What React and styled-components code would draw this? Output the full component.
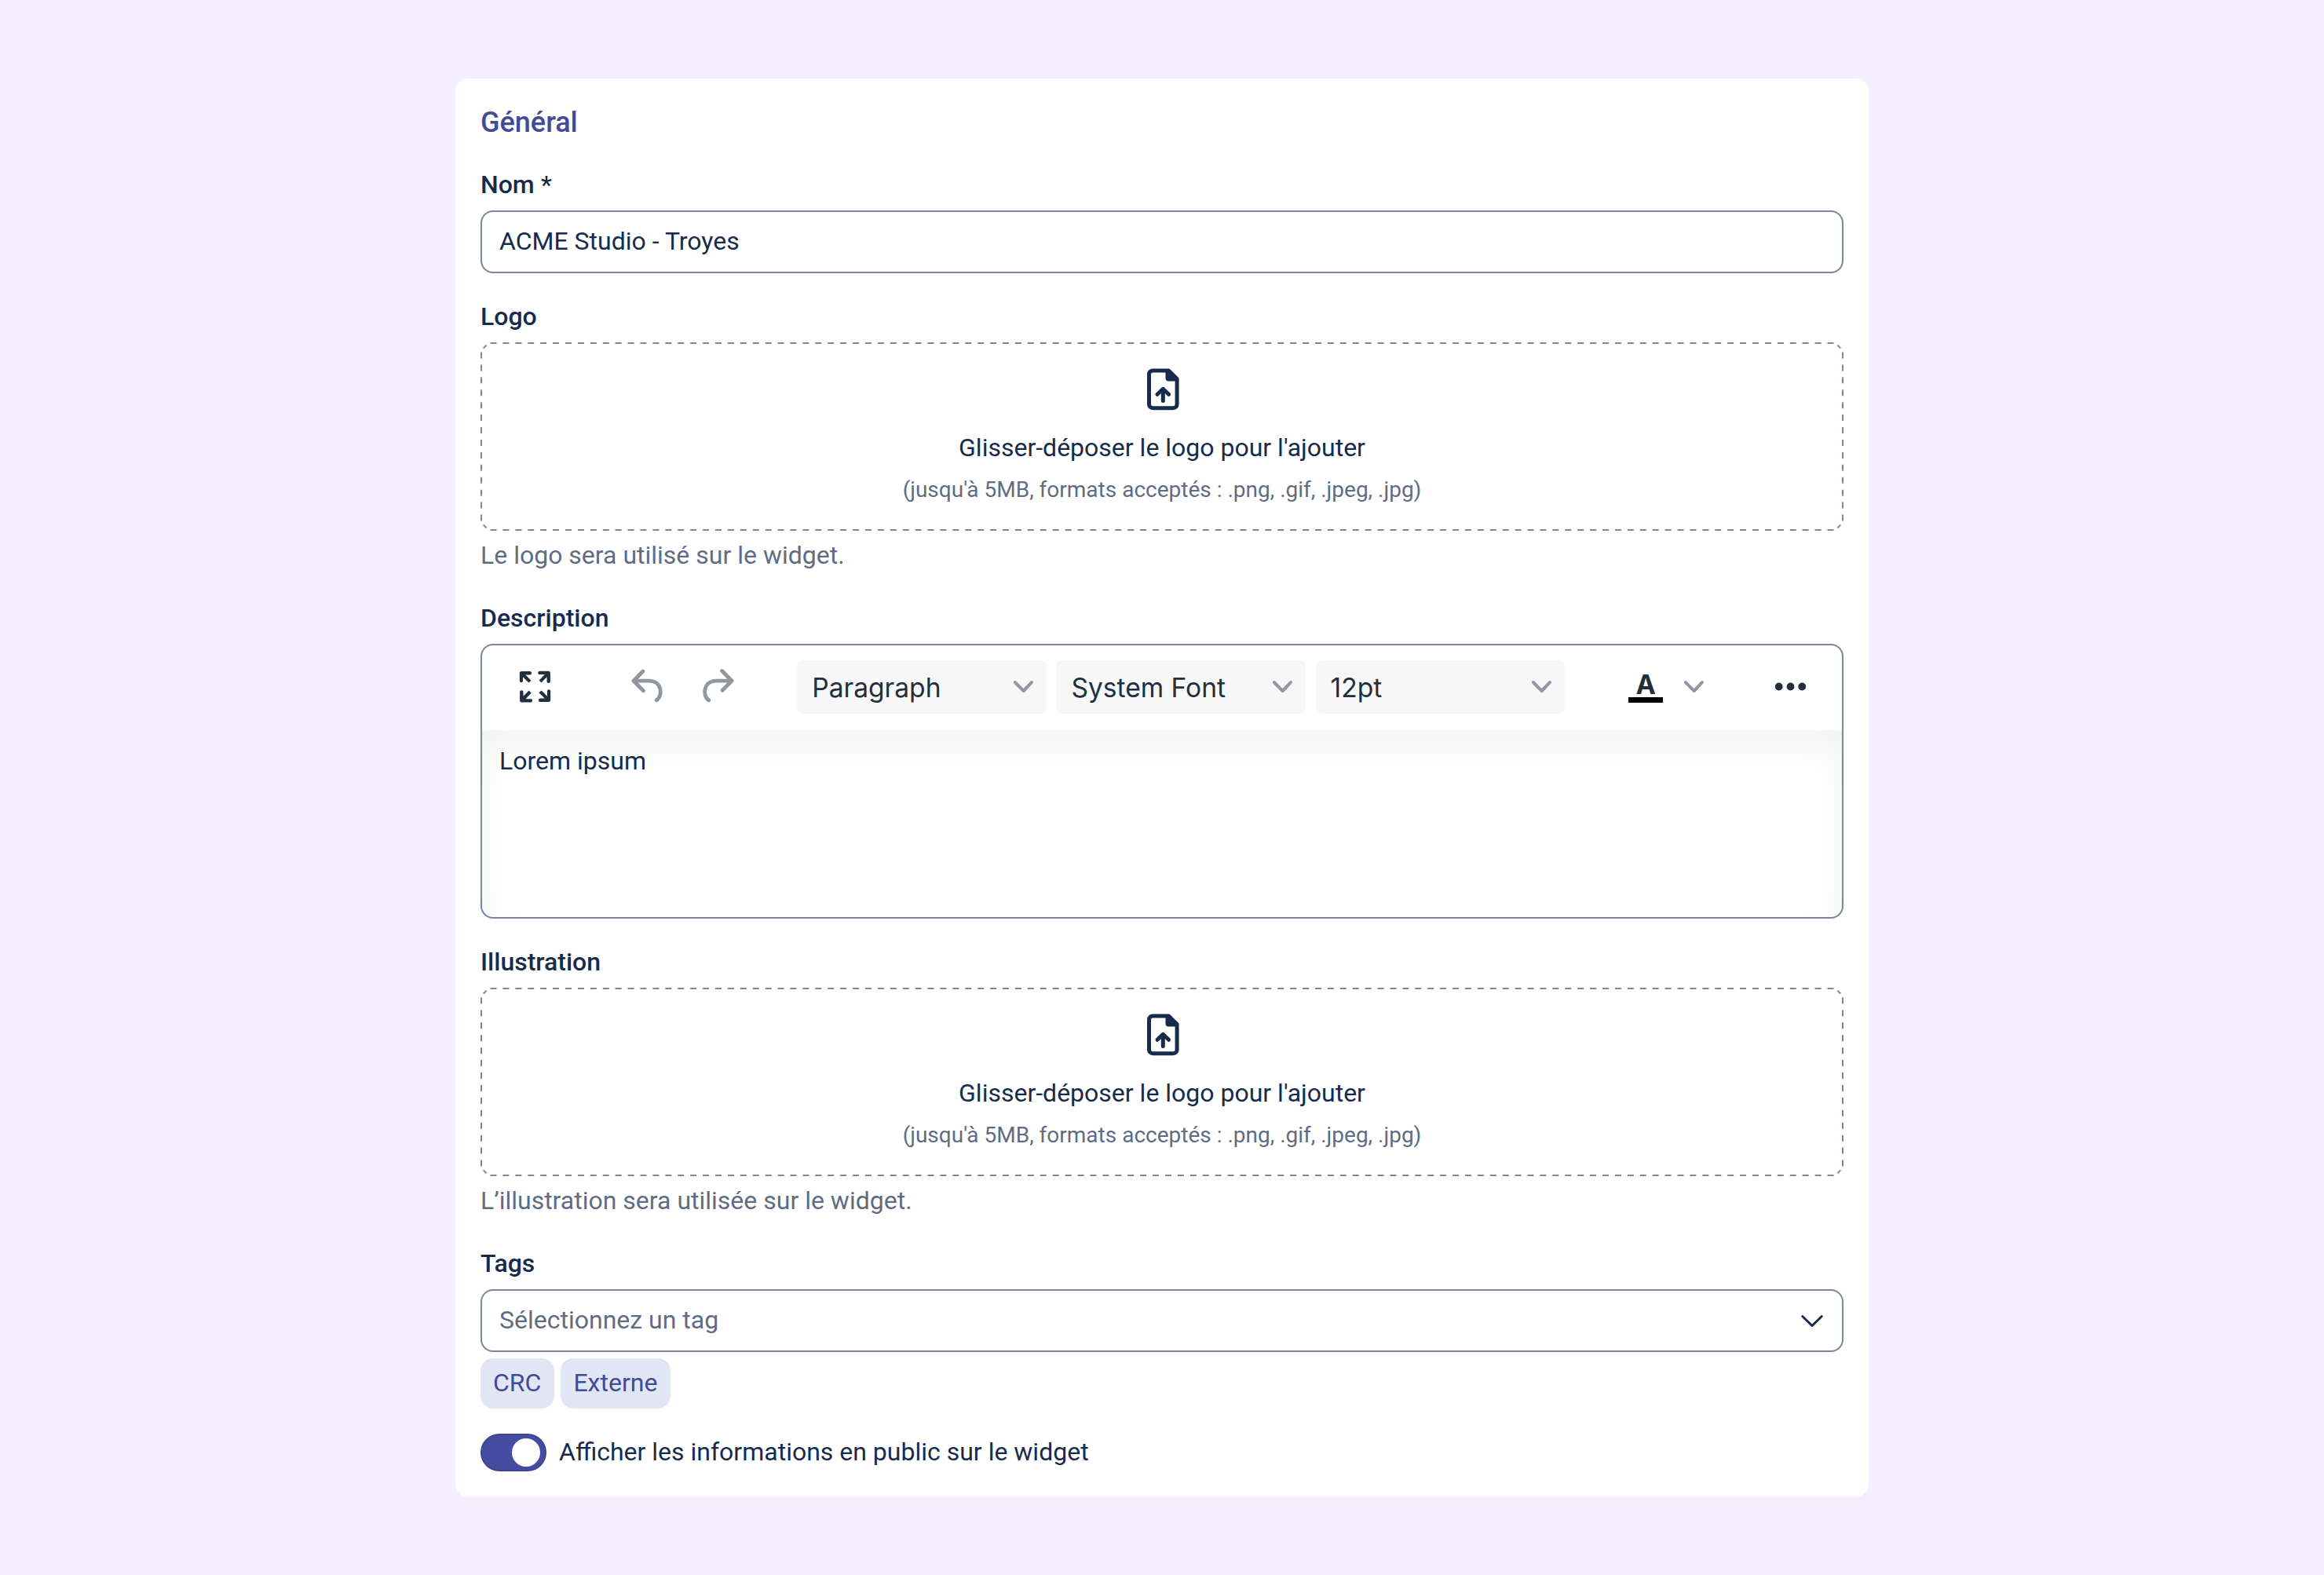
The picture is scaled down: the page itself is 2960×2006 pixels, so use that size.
import React from 'react';
import styled, { createGlobalStyle } from 'styled-components';

const GlobalStyle = createGlobalStyle`
  *, *::before, *::after { box-sizing: border-box; }
  body {
    margin: 0;
    background: #f4eeff;
    color: #172b4d;
    font-family: Roboto, sans-serif;
    font-size: 32px;
    line-height: 46px;
  }
`;

const Page = styled.main`
  display: flex;
  justify-content: center;
  min-height: 2006px;
  padding: 100px 0;
`;

const Card = styled.section`
  display: flex;
  flex-direction: column;
  width: 1800px;
  height: 1806px;
  padding: 32px;
  background: #fff;
  border-radius: 16px;
`;

const Title = styled.h2`
  margin: 0 0 32px;
  font-size: 36px;
  font-weight: 500;
  line-height: 48px;
  color: #434a97;
`;

const Field = styled.div`
  display: flex;
  flex-direction: column;
  margin-bottom: 32px;
`;

const Label = styled.label`
  padding-bottom: 2px;
  margin-bottom: 8px;
  font-weight: 500;
`;

const Control = styled.div`
  display: flex;
  align-items: center;
  justify-content: space-between;
  height: 80px;
  padding: 0 22px 2px;
  border: 2px solid #7a869a;
  border-radius: 16px;
  color: ${(p) => (p.$placeholder ? '#5e6c84' : '#172b4d')};
`;

const DropZone = styled.div`
  position: relative;
  display: flex;
  flex-direction: column;
  align-items: center;
  height: 240px;
  padding: 28px 0 0;
`;

const DashedFrame = styled.svg`
  position: absolute;
  inset: 0;
  width: 100%;
  height: 100%;
`;

const DropTitle = styled.div`
  margin-top: 19px;
`;

const DropHint = styled.div`
  margin-top: 10px;
  font-size: 28px;
  line-height: 42px;
  color: #5e6c84;
`;

const Helper = styled.div`
  margin-top: 8px;
  padding-bottom: 2px;
  color: #5e6c84;
`;

const Editor = styled.div`
  display: flex;
  flex-direction: column;
  height: 350px;
  border: 2px solid #7a869a;
  border-radius: 16px;
  overflow: hidden;
`;

const Toolbar = styled.div`
  display: flex;
  align-items: center;
  height: 108px;
  padding: 0 25px 3px 27px;
  color: #222f3e;
`;

const ToolButton = styled.button`
  display: flex;
  align-items: center;
  justify-content: center;
  width: 82px;
  height: 68px;
  margin: 0 0 0 ${(p) => p.$before ?? 0}px;
  padding: 0;
  border: 0;
  background: none;
  color: ${(p) => (p.$muted ? '#9097a0' : '#222f3e')};
`;

const ToolSelect = styled.div`
  display: flex;
  align-items: center;
  justify-content: space-between;
  width: 318px;
  height: 68px;
  margin-left: ${(p) => p.$before ?? 12.5}px;
  padding: 0 17px 0 19px;
  border-radius: 8px;
  background: #f7f7f7;
  font-family: Inter, sans-serif;
  font-size: 33.6px;
  color: #222f3e;
`;

const SelectText = styled.span`
  padding-top: 2px;
`;

const ColorGlyph = styled.span`
  display: flex;
  flex-direction: column;
  align-items: center;
  width: 44px;
  height: 40px;
  border-bottom: 7px solid #000;
  font-family: Inter, sans-serif;
  font-size: 34px;
  font-weight: 700;
  line-height: 34px;
`;

const EditorBody = styled.div`
  flex: 1;
  padding: 16px 22px;
  box-shadow: inset 0 20px 40px rgba(0, 0, 0, 0.05);
`;

const Chips = styled.div`
  display: flex;
  gap: 8px;
  margin-top: 8px;
`;

const Chip = styled.span`
  height: 64px;
  padding: 8px 17px 8px 16px;
  border-radius: 16px;
  background: #e1e6f5;
  color: #434a97;
`;

const SwitchRow = styled.div`
  display: flex;
  align-items: center;
  gap: 16px;
`;

const Switch = styled.span`
  display: flex;
  align-items: center;
  justify-content: flex-end;
  width: 84px;
  height: 48px;
  padding: 0 6px;
  border: 2px solid #3f4690;
  border-radius: 24px;
  background: #454da2;
`;

const Knob = styled.span`
  width: 36px;
  height: 36px;
  border-radius: 50%;
  background: #fff;
`;

const SwitchLabel = styled.span`
  padding-bottom: 2px;
`;

const TOOL_PATHS = {
  fullscreen:
    'm15.3 10-1.2-1.3 2.9-3h-2.3a.9.9 0 1 1 0-1.7H19c.5 0 .9.4.9.9v4.4a.9.9 0 1 1-1.8 0V7l-2.9 3Zm0 4 3 3v-2.3a.9.9 0 1 1 1.7 0V19c0 .5-.4.9-.9.9h-4.4a.9.9 0 1 1 0-1.8H17l-3-2.9 1.3-1.2ZM10 15.4l-2.9 3h2.3a.9.9 0 1 1 0 1.7H5a.9.9 0 0 1-.9-.9v-4.4a.9.9 0 1 1 1.8 0V17l2.9-3 1.2 1.3ZM8.7 10 5.7 7v2.3a.9.9 0 0 1-1.7 0V5c0-.5.4-.9.9-.9h4.4a.9.9 0 0 1 0 1.8H7l3 2.9-1.3 1.2Z',
  undo: 'M6.4 8H12c3.7 0 6.2 2 6.8 5.1.6 2.7-.4 5.6-2.3 6.8a1 1 0 0 1-1-1.8c1.1-.6 1.8-2.7 1.4-4.6-.5-2.1-2.1-3.5-4.9-3.5H6.4l3.3 3.3a1 1 0 1 1-1.4 1.4l-5-5a1 1 0 0 1 0-1.4l5-5a1 1 0 0 1 1.4 1.4L6.4 8Z',
  redo: 'M17.6 10H12c-2.8 0-4.4 1.4-4.9 3.5-.4 2 .3 4 1.4 4.6a1 1 0 1 1-1 1.8c-2-1.2-2.9-4.1-2.3-6.8.6-3 3-5.1 6.8-5.1h5.6l-3.3-3.3a1 1 0 1 1 1.4-1.4l5 5a1 1 0 0 1 0 1.4l-5 5a1 1 0 0 1-1.4-1.4l3.3-3.3Z',
  more: 'M6 10a2 2 0 0 0-2 2c0 1.1.9 2 2 2a2 2 0 0 0 2-2 2 2 0 0 0-2-2Zm12 0a2 2 0 0 0-2 2c0 1.1.9 2 2 2a2 2 0 0 0 2-2 2 2 0 0 0-2-2Zm-6 0a2 2 0 0 0-2 2c0 1.1.9 2 2 2a2 2 0 0 0 2-2 2 2 0 0 0-2-2Z',
};

const ToolIcon = ({ name }) => (
  <svg width="59" height="59" viewBox="0 0 24 24" fill="currentColor">
    <path d={TOOL_PATHS[name]} />
  </svg>
);

const ChevronMark = styled.svg`
  flex: none;
  margin-left: ${(p) => p.$before ?? 0}px;
`;

const SmallChevron = ({ before }) => (
  <ChevronMark $before={before} width="25" height="25" viewBox="0 0 10 10" fill="#9097a0">
    <path d="M8.7 2.2c.3-.3.8-.3 1 0 .4.4.4.9 0 1.2L5.7 7.8c-.3.3-.9.3-1.2 0L.2 3.4a.8.8 0 0 1 0-1.2c.3-.3.8-.3 1.1 0L5 6l3.7-3.8Z" />
  </ChevronMark>
);

const FileUploadIcon = () => (
  <svg width="64" height="64" viewBox="0 0 64 64" fill="none" stroke="#172b4d">
    <path
      d="M40.5 7.9H20.2a4.7 4.7 0 0 0-4.7 4.7V51a4.7 4.7 0 0 0 4.7 4.7h26.2A4.7 4.7 0 0 0 51.1 51V18.5Z"
      strokeWidth="5"
      strokeLinejoin="round"
    />
    <path d="M36.5 6v11.5a4 4 0 0 0 4 4H53L50 16 43 9Z" fill="#172b4d" stroke="none" />
    <path d="M33.3 46.5V32M26 38.3l7.3-7 7.3 7" strokeWidth="5" strokeLinecap="round" strokeLinejoin="round" />
  </svg>
);

const SelectChevron = () => (
  <svg width="32" height="32" viewBox="0 0 32 32" fill="none" stroke="#172b4d">
    <path d="M3.7 11.5 16 23.5l12.3-12" strokeWidth="3" strokeLinecap="round" strokeLinejoin="round" />
  </svg>
);

const LogoDrop = () => (
  <DropZone>
    <DashedFrame viewBox="0 0 1736 240" fill="none" stroke="#7a869a" strokeWidth="2">
      <path d="M12.5 1h1711M12.5 239h1711" strokeDasharray="8 7.916" />
      <path d="M1 12.5v215M1735 12.5v215" strokeDasharray="8 7.923" />
      <path d="M3.7 7.6 7.6 3.7M1728.4 3.7l3.9 3.9M3.7 232.4l3.9 3.9M1728.4 236.3l3.9-3.9" />
    </DashedFrame>
    <FileUploadIcon />
    <DropTitle>Glisser-déposer le logo pour l'ajouter</DropTitle>
    <DropHint>(jusqu'à 5MB, formats acceptés : .png, .gif, .jpeg, .jpg)</DropHint>
  </DropZone>
);

export default function App() {
  return (
    <>
      <GlobalStyle />
      <Page>
        <Card>
          <Title>Général</Title>
          <Field>
            <Label>Nom *</Label>
            <Control>ACME Studio - Troyes</Control>
          </Field>
          <Field>
            <Label>Logo</Label>
            <LogoDrop />
            <Helper>Le logo sera utilisé sur le widget.</Helper>
          </Field>
          <Field>
            <Label>Description</Label>
            <Editor>
              <Toolbar>
                <ToolButton><ToolIcon name="fullscreen" /></ToolButton>
                <ToolButton $before={62.5} $muted><ToolIcon name="undo" /></ToolButton>
                <ToolButton $before={4} $muted><ToolIcon name="redo" /></ToolButton>
                <ToolSelect $before={62}><SelectText>Paragraph</SelectText><SmallChevron /></ToolSelect>
                <ToolSelect><SelectText>System Font</SelectText><SmallChevron /></ToolSelect>
                <ToolSelect><SelectText>12pt</SelectText><SmallChevron /></ToolSelect>
                <ToolButton $before={62}><ColorGlyph>A</ColorGlyph></ToolButton>
                <SmallChevron before={8} />
                <ToolButton $before={69}><ToolIcon name="more" /></ToolButton>
              </Toolbar>
              <EditorBody>Lorem ipsum</EditorBody>
            </Editor>
          </Field>
          <Field>
            <Label>Illustration</Label>
            <LogoDrop />
            <Helper>L’illustration sera utilisée sur le widget.</Helper>
          </Field>
          <Field>
            <Label>Tags</Label>
            <Control $placeholder>
              Sélectionnez un tag
              <SelectChevron />
            </Control>
            <Chips>
              <Chip>CRC</Chip>
              <Chip>Externe</Chip>
            </Chips>
          </Field>
          <SwitchRow>
            <Switch><Knob /></Switch>
            <SwitchLabel>Afficher les informations en public sur le widget</SwitchLabel>
          </SwitchRow>
        </Card>
      </Page>
    </>
  );
}
